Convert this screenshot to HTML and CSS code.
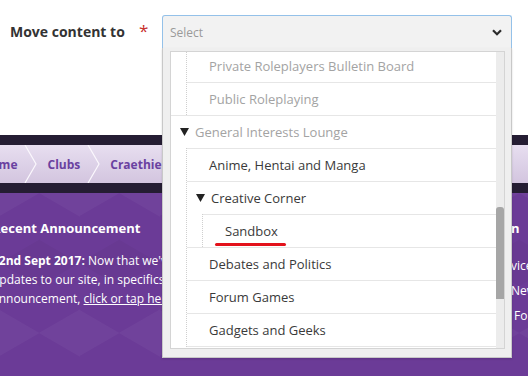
FILE: index.html
```html
<!DOCTYPE html>
<html lang="en">
<head>
    <meta charset="UTF-8">
    <meta name="viewport" content="width=device-width, initial-scale=1.0">
    <title>Move content</title>
    <link rel="stylesheet" href="styles.css">
</head>
<body>
    <div class="formarea">
        <div class="field">
            <label class="fieldlabel">Move content to</label>
            <span class="req">*</span>
            <div class="select">
                <div class="selecthead">
                    <span>Select</span>
                    <svg class="chev" width="10" height="7" viewBox="0 0 10 7"><path d="M1 1.2 L5 5.2 L9 1.2" fill="none" stroke="#2b2b2b" stroke-width="2.2"/></svg>
                </div>
                <div class="panel">
                    <div class="listbox">
                        <ul class="tree">
                            <li>
                                <ul class="kids">
                                    <li><div class="row off">Private Roleplayers Bulletin Board</div></li>
                                    <li><div class="row off">Public Roleplaying</div></li>
                                </ul>
                            </li>
                            <li>
                                <div class="row group off"><svg class="tri" width="9" height="8" viewBox="0 0 9 8"><polygon points="0,0 9,0 4.5,8" fill="#222"/></svg>General Interests Lounge</div>
                                <ul class="kids">
                                    <li><div class="row">Anime, Hentai and Manga</div></li>
                                    <li>
                                        <div class="row group"><svg class="tri" width="9" height="8" viewBox="0 0 9 8"><polygon points="0,0 9,0 4.5,8" fill="#222"/></svg>Creative Corner</div>
                                        <ul class="kids">
                                            <li><div class="row mark">Sandbox<span class="redline"></span></div></li>
                                        </ul>
                                    </li>
                                    <li><div class="row">Debates and Politics</div></li>
                                    <li><div class="row">Forum Games</div></li>
                                    <li><div class="row">Gadgets and Geeks</div></li>
                                    <li><div class="row">Gaming</div></li>
                                </ul>
                            </li>
                        </ul>
                        <div class="scroll"><div class="thumb"></div></div>
                    </div>
                </div>
            </div>
        </div>
    </div>

    <div class="band"></div>
    <nav class="crumbs">
        <a href="#">Home</a>
        <svg class="sep" width="13" height="38" viewBox="0 0 13 38"><path d="M1 0 L12 19 L1 38" fill="none" stroke="#fbf8fd" stroke-width="1.2"/></svg>
        <a href="#">Clubs</a>
        <svg class="sep" width="13" height="38" viewBox="0 0 13 38"><path d="M1 0 L12 19 L1 38" fill="none" stroke="#fbf8fd" stroke-width="1.2"/></svg>
        <a href="#">Craethiel</a>
    </nav>
    <div class="band"></div>

    <div class="hero">
        <div class="announce">
            <h2>Recent Announcement</h2>
            <p><b>22nd Sept 2017:</b> Now that we've made some big changes</p>
            <p>updates to our site, in specifics to the way</p>
            <p>announcement, <a href="#">click or tap here</a> to read more.</p>
        </div>
        <div class="side">
            <h2>n</h2>
            <p>vices</p>
            <p>News</p>
            <p class="fo">Forums</p>
        </div>
    </div>
</body>
</html>
```

FILE: styles.css
```css
*{
    margin: 0;
    padding: 0;
    box-sizing: border-box;
    font-family: "Open Sans", "DejaVu Sans", sans-serif;
}
body{
    width: 528px;
    height: 376px;
    overflow: hidden;
    background: #fff;
    color: #333;
}
.formarea{
    height: 135px;
    position: relative;
    z-index: 2;
}
.field{
    display: flex;
    align-items: flex-start;
    padding: 15px 0 0 10px;
}
.fieldlabel{
    width: 129px;
    font-size: 14px;
    font-weight: 700;
    line-height: 33px;
    color: #333;
}
.req{
    width: 23px;
    font-size: 17px;
    line-height: 31px;
    color: #c8302c;
}
.select{
    width: 350px;
    position: relative;
}
.selecthead{
    height: 33px;
    display: flex;
    align-items: center;
    justify-content: space-between;
    padding: 0 9px 0 7px;
    background: #f2f2f2;
    border: 1px solid #94c1e9;
    border-bottom: none;
    border-radius: 3px 3px 0 0;
    font-size: 12px;
    color: #9a9a9a;
}
.chev{
    display: block;
    margin-top: 1px;
}
.panel{
    position: absolute;
    top: 100%;
    left: 0;
    width: 350px;
    background: #efefef;
    border: 1px solid #c8c8c8;
    border-top: none;
    padding: 3px 6px 8px 7px;
    box-shadow: 0 1px 2px rgba(0,0,0,0.15);
}
.listbox{
    display: flex;
    height: 298px;
    border: 1px solid #d4d4d4;
    background: #fff;
    overflow: hidden;
}
.tree{
    flex: 1;
    list-style: none;
    margin-top: -3px;
    overflow: hidden;
}
.tree ul{
    list-style: none;
}
.kids{
    margin-left: 15px;
    border-left: 1px dotted #cfcfcf;
}
.row{
    height: 33px;
    line-height: 32px;
    border-top: 1px solid #e6e6e6;
    padding-left: 22px;
    font-size: 13px;
    color: #3a3a3a;
    white-space: nowrap;
    position: relative;
}
.row.off{
    color: #a3a3a3;
}
.row.group{
    display: flex;
    align-items: center;
    padding-left: 9px;
}
.tri{
    display: block;
    margin-right: 6px;
}
.redline{
    position: absolute;
    left: 12px;
    top: 28px;
    width: 71px;
    height: 3px;
    border-radius: 2px;
    background: #e3121b;
}
.scroll{
    width: 8px;
    background: #ececec;
}
.thumb{
    margin-top: 155px;
    height: 92px;
    background: #a6a6a6;
    border-radius: 3px 3px 0 0;
}
.band{
    height: 10px;
    background: #251d33;
}
.crumbs{
    height: 38px;
    display: flex;
    align-items: center;
    margin-left: -18px;
    background: linear-gradient(to bottom, #e7def0, #d3c5df);
}
.crumbs a{
    font-size: 12px;
    font-weight: 700;
    color: #6a41a0;
    text-decoration: none;
}
.sep{
    display: block;
    margin: 0 10px 0 7px;
}
.hero{
    height: 183px;
    display: flex;
    background-color: #6b3b97;
    background-image:
        linear-gradient(30deg, rgba(255,255,255,0.035) 12%, transparent 12.5%, transparent 87%, rgba(255,255,255,0.035) 87.5%),
        linear-gradient(150deg, rgba(255,255,255,0.035) 12%, transparent 12.5%, transparent 87%, rgba(255,255,255,0.035) 87.5%),
        linear-gradient(30deg, rgba(0,0,0,0.03) 12%, transparent 12.5%, transparent 87%, rgba(0,0,0,0.03) 87.5%),
        linear-gradient(150deg, rgba(0,0,0,0.03) 12%, transparent 12.5%, transparent 87%, rgba(0,0,0,0.03) 87.5%);
    background-size: 80px 140px;
    background-position: 0 0, 0 0, 40px 70px, 40px 70px;
    color: #fff;
}
.announce{
    width: 519px;
    flex-shrink: 0;
    margin-left: -8px;
    padding-top: 25px;
    white-space: nowrap;
    overflow: hidden;
}
.announce h2, .side h2{
    font-size: 13px;
    font-weight: 700;
    line-height: 20px;
    margin-bottom: 13px;
}
.announce p{
    font-size: 12px;
    line-height: 20px;
}
.announce p + p{
    margin-top: -1px;
}
.announce a{
    color: #fff;
}
.side{
    flex: 1;
    padding-top: 25px;
    white-space: nowrap;
    overflow: hidden;
}
.side h2{
    margin-bottom: 15px;
}
.side p{
    font-size: 12px;
    line-height: 25px;
}
.side .fo{
    padding-left: 3px;
}
```
